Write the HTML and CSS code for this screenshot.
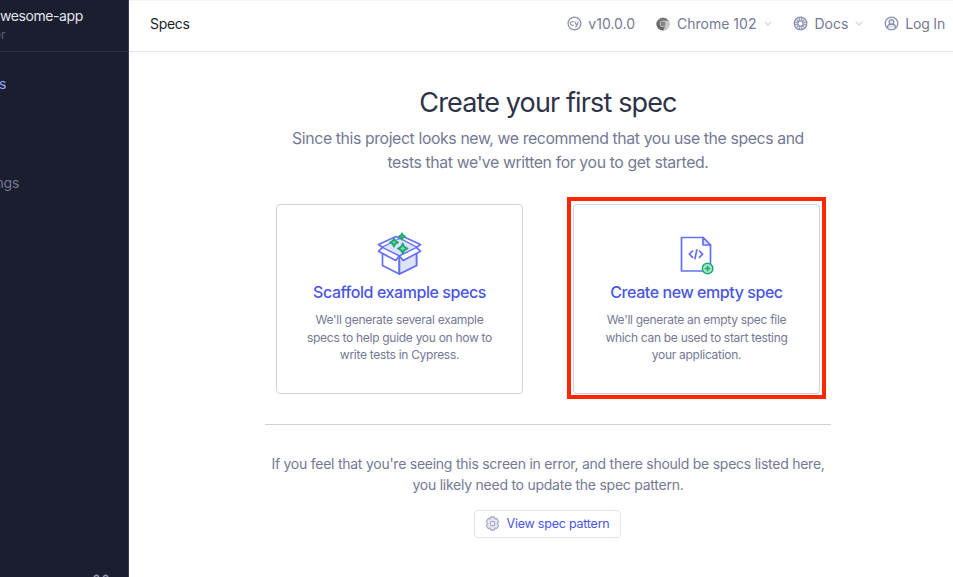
FILE: index.html
```
<!DOCTYPE html>
<html lang="en">
<head>
<meta charset="utf-8">
<title>Specs</title>
<link rel="stylesheet" href="styles.css">
</head>
<body>
<div class="app">
  <aside class="sidebar">
    <div class="project">
      <div class="project-name">wesome-app</div>
      <div class="project-type">er</div>
    </div>
    <nav class="nav">
      <a class="nav-item active">s</a>
      <a class="nav-item"></a>
      <a class="nav-item settings">ngs</a>
    </nav>
    <div class="shortcut">
      <svg width="16" height="16" viewBox="0 0 16 16" fill="none" stroke="#9095ad" stroke-width="1.7"><path d="M5.500 5.500h5v5h-5zM5.500 5.500H3.600a2.100 2.100 0 1 1 1.900-2zM10.500 5.500V3.500a2.100 2.100 0 1 1 2 2zM5.500 10.500v2a2.100 2.100 0 1 1-2-2zM10.500 10.500h2a2.100 2.100 0 1 1-2 2z"/></svg>
    </div>
  </aside>
  <div class="main">
    <header class="header">
      <span class="page-title">Specs</span>
      <div class="tools">
        <div class="tool version">
          <svg width="15" height="15" viewBox="0 0 15 15" fill="none" stroke="#8c91ad"><circle cx="7.500" cy="7.500" r="6.400" stroke-width="1.300"/><path d="M6.700 6.200a1.900 1.900 0 1 0 0 2.600M8 5.800l1.500 3.400M11.400 5.800L9.600 9.700q-.5 1.200-1.500 1.200" stroke-width="1.200"/></svg>
          <span>v10.0.0</span>
        </div>
        <div class="tool browser">
          <svg width="14" height="14" viewBox="0 0 14 14"><circle cx="7" cy="7" r="6.500" fill="#777"/><path d="M7 3.800h5.700A6.500 6.500 0 0 1 7 13.500l2.900-5z" fill="#c9c9c9"/><path d="M7 13.500A6.500 6.500 0 0 1 1.400 3.800L4.200 8.600 7 10l1.500-.3z" fill="#686868"/><circle cx="7" cy="7" r="3.200" fill="#c4c4c4"/><circle cx="7" cy="7" r="2.400" fill="#858585"/></svg>
          <span>Chrome 102</span>
          <svg class="chevron" width="8" height="5" viewBox="0 0 8 5" fill="none" stroke="#d5d7e5" stroke-width="1.300"><path d="M.7.700L4 4 7.300.7"/></svg>
        </div>
        <div class="tool docs">
          <svg width="15" height="15" viewBox="0 0 15 15" fill="#e1e3ed" stroke="#8c91ad" stroke-width="1.300"><circle cx="7.500" cy="7.500" r="6.300"/><path d="M5.700 5.700L3.500 3.500M9.300 5.700l2.200-2.200M5.700 9.300l-2.200 2.200M9.300 9.300l2.200 2.200" stroke-width="1"/><circle cx="7.500" cy="7.500" r="2.600" fill="#fff"/><path d="M6.300 1.400v3.600M8.700 1.400v3.600M6.300 10v3.600M8.700 10v3.600M1.400 6.300H5M1.400 8.700H5M10 6.300h3.600M10 8.700h3.600" stroke-width=".9"/></svg>
          <span>Docs</span>
          <svg class="chevron" width="8" height="5" viewBox="0 0 8 5" fill="none" stroke="#d5d7e5" stroke-width="1.300"><path d="M.7.700L4 4 7.300.7"/></svg>
        </div>
        <div class="tool login">
          <svg width="15" height="15" viewBox="0 0 15 15" fill="none" stroke="#8c91ad" stroke-width="1.300"><circle cx="7.500" cy="7.500" r="6.300"/><circle cx="7.500" cy="6" r="2.400" fill="#e1e3ed"/><path d="M3.600 12.200V11q0-2.300 2.300-2.600h3.200q2.300.3 2.300 2.600v1.200" fill="#e1e3ed"/></svg>
          <span>Log In</span>
        </div>
      </div>
    </header>
    <main class="content">
      <h1>Create your first spec</h1>
      <p class="lead">Since this project looks new, we recommend that you use the specs and<br>tests that we've written for you to get started.</p>
      <div class="cards">
        <section class="card">
          <svg class="card-icon" width="46" height="44" viewBox="0 0 46 44" stroke="#6470f3" stroke-width="1.700" stroke-linejoin="round"><path d="M5.500 15v18.500L22.300 42 39.500 33.500V15" fill="#fff"/><path d="M22.300 24L39.500 17v16.500L22.300 42z" fill="#dfe2fd"/><path d="M5.500 15.300L20 5.500l19.500 9.800-17.200 8.500z" fill="#dfe2fd"/><path d="M1.500 12.500L19 4.500l4 2-17.500 8.800zM43.500 12.500L26 4.500l-3 2 16.500 8.800zM5.500 15.300l-4 4L18.700 28.500l3.600-4.700zM39.500 15.300l4 4L26.200 28.500l-3.900-4.700z" fill="#fff"/><path d="M6.500 15.300L21 7.500l3 0 14.500 7.800-16.200 7.600z" fill="#dfe2fd" stroke="none"/><path d="M22.300 24v18" fill="none"/><g fill="#7fdcb4" stroke="#1fa971" stroke-width="1.800"><path d="M17 6.500q.7 3.300 4 4-3.300.7-4 4-.7-3.300-4-4 3.300-.7 4-4zM25.700 11.500q.9 4 4.900 5-4 .9-4.900 5-.9-4.100-4.900-5 4-1 4.900-5zM25 1.500q.5 2.500 3 3-2.500.5-3 3-.5-2.500-3-3 2.500-.5 3-3z"/></g></svg>
          <h2>Scaffold example specs</h2>
          <p>We'll generate several example<br>specs to help guide you on how to<br>write tests in Cypress.</p>
        </section>
        <section class="card highlighted">
          <svg class="card-icon" width="46" height="44" viewBox="1 0 46 44" fill="none" stroke="#6470f3" stroke-width="1.700" stroke-linejoin="round"><path d="M8.500 5.500h21.500l7.500 7.500v26H8.500z"/><path d="M30 5.500v7.500h7.500z" fill="#dfe2fd"/><path d="M20 18.500l-3.600 3.700 3.600 3.700M26 18.500l3.600 3.700-3.600 3.700M24 17.200l-2.200 10"/><circle cx="34.600" cy="36.500" r="5.300" fill="#a3e7cb" stroke="#1fa971" stroke-width="1.500"/><path d="M34.600 33.700v5.600M31.800 36.500h5.600" stroke="#1fa971" stroke-width="1.700"/></svg>
          <h2>Create new empty spec</h2>
          <p>We'll generate an empty spec file<br>which can be used to start testing<br>your application.</p>
        </section>
      </div>
      <hr>
      <p class="note">If you feel that you're seeing this screen in error, and there should be specs listed here,<br>you likely need to update the spec pattern.</p>
      <button class="pattern">
        <svg width="15" height="15" viewBox="0 0 15 15" fill="#e6e7f0" stroke="#a9adc5" stroke-width="1.300" stroke-linejoin="round"><path d="M5.700 1h3.600l.6 1.900 1.900-.4 1.900 3-1.400 2 1.400 2-1.900 3-1.900-.4-.6 1.900H5.700l-.6-1.900-1.900.4-1.900-3 1.400-2-1.400-2 1.900-3 1.900.4z"/><circle cx="7.500" cy="7.500" r="2.200" fill="#fff"/></svg>
        <span>View spec pattern</span>
      </button>
    </main>
  </div>
</div>
</body>
</html>
```
FILE: styles.css
```
* { box-sizing: border-box; }
body { margin: 0; font-family: Inter, "Liberation Sans", sans-serif; background: #fff; }
h1, h2, p { margin: 0; white-space: nowrap; }
svg { display: block; flex: none; overflow: visible; }
.app { display: flex; height: 577px; overflow: hidden; }
.sidebar { width: 129px; flex: none; background: #1b1e2e; border-right: 1px solid #3a3d50; display: flex; flex-direction: column; overflow: hidden; }
.project { height: 52px; padding-top: 6px; border-bottom: 1px solid #2e3247; }
.project-name { font-size: 14px; line-height: 20px; letter-spacing: -.42px; color: #e1e3ed; }
.project-type { font-size: 12px; line-height: 18px; margin-left: -6px; color: #5a5f7a; }
.nav { display: flex; flex-direction: column; padding-top: 7px; }
.nav-item { height: 49px; line-height: 49px; font-size: 14px; margin-left: -1px; color: #747994; }
.nav-item.active { color: #9aa2fc; }
.nav-item.settings { margin-left: -4.500px; line-height: 51px; letter-spacing: -.2px; }
.shortcut { margin: auto 0 -13px 93px; }
.main { flex: 1; min-width: 0; }
.header { height: 52px; border-top: 1px solid #f3f4fa; border-bottom: 1px solid #e1e3ed; display: flex; justify-content: space-between; padding: 0 8px 5px 21px; align-items: center; }
.page-title { font-size: 14px; letter-spacing: -.3px; color: #1b1e2e; }
.tools { display: flex; color: #747994; font-size: 14px; }
.tool { display: flex; align-items: center; gap: 6px; margin-left: 21px; }
.login { letter-spacing: -.2px; }
.browser { gap: 7px; }
.browser .chevron { margin-left: 1px; }
.docs .chevron { margin-left: 1px; }
.content { display: flex; flex-direction: column; align-items: center; padding: 33px 0 0 14px; }
h1 { font-size: 27px; font-weight: 400; line-height: 36px; letter-spacing: -.87px; color: #2e3247; }
.lead { font-size: 15.800px; line-height: 24px; letter-spacing: -.38px; text-align: center; color: #747994; margin-top: 6px; }
.cards { display: flex; gap: 50px; margin-top: 29px; }
.card { position: relative; width: 247px; height: 190px; border: 1px solid #d0d2e0; border-radius: 4px; display: flex; flex-direction: column; align-items: center; padding-top: 27px; }
.card.highlighted::after { content: ""; position: absolute; inset: -8px -7px -6px -7px; border: 4px solid #ff2600; }
h2 { font-size: 16px; line-height: 24px; font-weight: 500; letter-spacing: -.43px; color: #4956e3; margin-top: 4px; }
.card p { font-size: 12px; line-height: 17.700px; letter-spacing: -.29px; text-align: center; color: #747994; margin-top: 7px; }
hr { width: 566px; border: 0; height: 1px; background: #d0d2e0; margin: 30px 0 0; }
.note { font-size: 14px; line-height: 21px; letter-spacing: -.25px; text-align: center; color: #747994; margin-top: 28px; }
.pattern { display: flex; align-items: center; gap: 7px; width: 147px; height: 28px; margin: 15px 2px 0 0; padding: 0 10px 1px 10px; background: #fff; border: 1px solid #e1e3ed; border-radius: 4px; font: 400 12.500px Inter, sans-serif; letter-spacing: -.22px; color: #4956e3; white-space: nowrap; }
```
